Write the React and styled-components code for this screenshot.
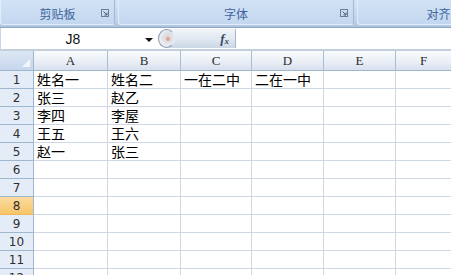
import styled, { createGlobalStyle } from "styled-components";

const GlobalStyle = createGlobalStyle`
  html, body {
    margin: 0;
    padding: 0;
    background: #ffffff;
    overflow: hidden;
  }
  body {
    font-family: "Noto Sans CJK SC", "Liberation Sans", sans-serif;
  }
`;

const columns = [
  { name: "A", width: 74 },
  { name: "B", width: 73 },
  { name: "C", width: 71 },
  { name: "D", width: 72 },
  { name: "E", width: 72 },
  { name: "F", width: 56 },
];

const data = [
  ["姓名一", "姓名二", "一在二中", "二在一中"],
  ["张三", "赵乙"],
  ["李四", "李屋"],
  ["王五", "王六"],
  ["赵一", "张三"],
];

const rowCount = 12;
const selectedRow = 8;

function Launcher() {
  return (
    <svg width="8" height="8" viewBox="0 0 8 8">
      <rect x="0.5" y="0.5" width="7" height="7" fill="none" stroke="#6d7f96" />
      <path d="M2.5 2.5 L6 6 M6 3.5 L6 6 L3.5 6" stroke="#4f6178" fill="none" />
    </svg>
  );
}

export default function App() {
  const gridCols = `34px ${columns.map((c) => c.width + "px").join(" ")}`;

  return (
    <>
      <GlobalStyle />
      <Page>
        <Ribbon>
          <Group width={115}>
            <GroupLabel>剪贴板</GroupLabel>
            <LauncherSlot>
              <Launcher />
            </LauncherSlot>
          </Group>
          <Group width={236}>
            <GroupLabel>字体</GroupLabel>
            <LauncherSlot>
              <Launcher />
            </LauncherSlot>
          </Group>
          <Group width={186} open>
            <GroupLabel>对齐方式</GroupLabel>
          </Group>
        </Ribbon>

        <FormulaBar>
          <NameBox>
            <NameText>J8</NameText>
            <DropArrow />
          </NameBox>
          <FxPanel>
            <Knob>
              <KnobDot />
            </Knob>
            <Fx>
              f<sub>x</sub>
            </Fx>
          </FxPanel>
          <FormulaInput />
        </FormulaBar>

        <Sheet style={{ gridTemplateColumns: gridCols }}>
          <Corner>
            <CornerTriangle />
          </Corner>
          {columns.map((c) => (
            <ColHeader key={c.name}>{c.name}</ColHeader>
          ))}
          {Array.from({ length: rowCount }, (_, r) => (
            <Row key={r}>
              <RowHeader selected={r + 1 === selectedRow}>{r + 1}</RowHeader>
              {columns.map((c, ci) => (
                <Cell key={c.name}>{(data[r] && data[r][ci]) || ""}</Cell>
              ))}
            </Row>
          ))}
        </Sheet>
      </Page>
    </>
  );
}

const Page = styled.div`
  width: 451px;
  height: 275px;
  overflow: hidden;
  display: flex;
  flex-direction: column;
`;

const Ribbon = styled.div`
  height: 28px;
  flex: none;
  display: flex;
  align-items: flex-start;
  gap: 3px;
  background: linear-gradient(#d6e4f4, #bcd0e8 80%, #aec4df);
  border-bottom: 1px solid #8ea6c4;
  box-sizing: border-box;
  overflow: hidden;
`;

const Group = styled.div`
  position: relative;
  width: ${(p) => p.width}px;
  flex: none;
  height: 25px;
  box-sizing: border-box;
  background: linear-gradient(#d3e3f5, #c2d7ef);
  border: 1px solid #e3edf8;
  border-top: none;
  border-right: ${(p) => (p.open ? "none" : "1px solid #9fb9d8")};
  border-radius: 0 0 3px 3px;
  display: flex;
  align-items: center;
  justify-content: center;
`;

const GroupLabel = styled.span`
  font-size: 12px;
  color: #40659c;
  line-height: 14px;
  padding-top: 4px;
  white-space: nowrap;
`;

const LauncherSlot = styled.div`
  position: absolute;
  right: 5px;
  top: 9px;
  display: flex;
`;

const FormulaBar = styled.div`
  flex: none;
  display: flex;
  background: #ffffff;
  border-bottom: 2px solid #c4cfdc;
  height: 21px;
`;

const NameBox = styled.div`
  width: 158px;
  flex: none;
  display: flex;
  align-items: center;
  border-left: 1px solid #c9d6e6;
  box-sizing: border-box;
`;

const NameText = styled.span`
  flex: 1;
  text-align: center;
  font-family: "Liberation Sans", sans-serif;
  font-size: 14px;
  color: #111;
`;

const DropArrow = styled.span`
  width: 0;
  height: 0;
  border-left: 4px solid transparent;
  border-right: 4px solid transparent;
  border-top: 4px solid #111;
  margin-right: 5px;
  margin-top: 2px;
`;

const FxPanel = styled.div`
  width: 78px;
  flex: none;
  display: flex;
  align-items: center;
  justify-content: space-between;
  background: linear-gradient(#f1f5fa, #dfe7f1 55%, #cbd7e5);
  border-radius: 10px 0 0 10px;
  box-sizing: border-box;
  border-right: 1px solid #a8b8cc;
  margin: 1px 0;
`;

const Knob = styled.div`
  width: 17px;
  height: 19px;
  border-radius: 50%;
  box-sizing: border-box;
  border: 1px solid #8d9bad;
  border-right-color: transparent;
  background: radial-gradient(circle at 60% 45%, #e9cfc4 0, #dfe4eb 40%, #f4f6f9 80%);
  display: flex;
  align-items: center;
  justify-content: center;
`;

const KnobDot = styled.span`
  width: 4px;
  height: 4px;
  border-radius: 50%;
  background: #d9a894;
  margin-left: 3px;
`;

const Fx = styled.span`
  font-family: "Liberation Serif", serif;
  font-style: italic;
  font-weight: bold;
  font-size: 13px;
  color: #3c4a5c;
  margin-right: 6px;
  sub {
    font-size: 9px;
    vertical-align: -1px;
  }
`;

const FormulaInput = styled.div`
  flex: 1;
  background: #ffffff;
`;

const Sheet = styled.div`
  display: grid;
  grid-auto-rows: 18px;
  grid-template-rows: 20px;
  overflow: hidden;
`;

const Row = styled.div`
  display: contents;
`;

const Corner = styled.div`
  position: relative;
  background: linear-gradient(#dde7f4, #c6d6ec);
  border-right: 1px solid #9eb6ce;
  border-bottom: 1px solid #9eb6ce;
`;

const CornerTriangle = styled.div`
  position: absolute;
  right: 3px;
  bottom: 3px;
  width: 0;
  height: 0;
  border-left: 8px solid transparent;
  border-bottom: 8px solid #f2f6fb;
`;

const ColHeader = styled.div`
  background: linear-gradient(#f9fbfd, #e9eef6 60%, #d7e0ed);
  border-right: 1px solid #a9bdd3;
  border-bottom: 1px solid #9eb6ce;
  font-family: "Liberation Serif", serif;
  font-size: 13px;
  color: #2b2b2b;
  display: flex;
  align-items: center;
  justify-content: center;
  padding-top: 1px;
`;

const RowHeader = styled.div`
  background: ${(p) =>
    p.selected ? "linear-gradient(#fbdba0, #f7c56a)" : "#e4ecf7"};
  border-right: 1px solid #9eb6ce;
  border-bottom: 1px solid ${(p) => (p.selected ? "#f0b85a" : "#9eb6ce")};
  font-family: "DejaVu Sans", sans-serif;
  font-size: 12px;
  color: #2f2f2f;
  display: flex;
  align-items: center;
  justify-content: center;
`;

const Cell = styled.div`
  border-right: 1px solid #d0d7e5;
  border-bottom: 1px solid #d0d7e5;
  font-size: 14px;
  line-height: 17px;
  color: #000;
  padding-left: 3px;
  white-space: nowrap;
`;
